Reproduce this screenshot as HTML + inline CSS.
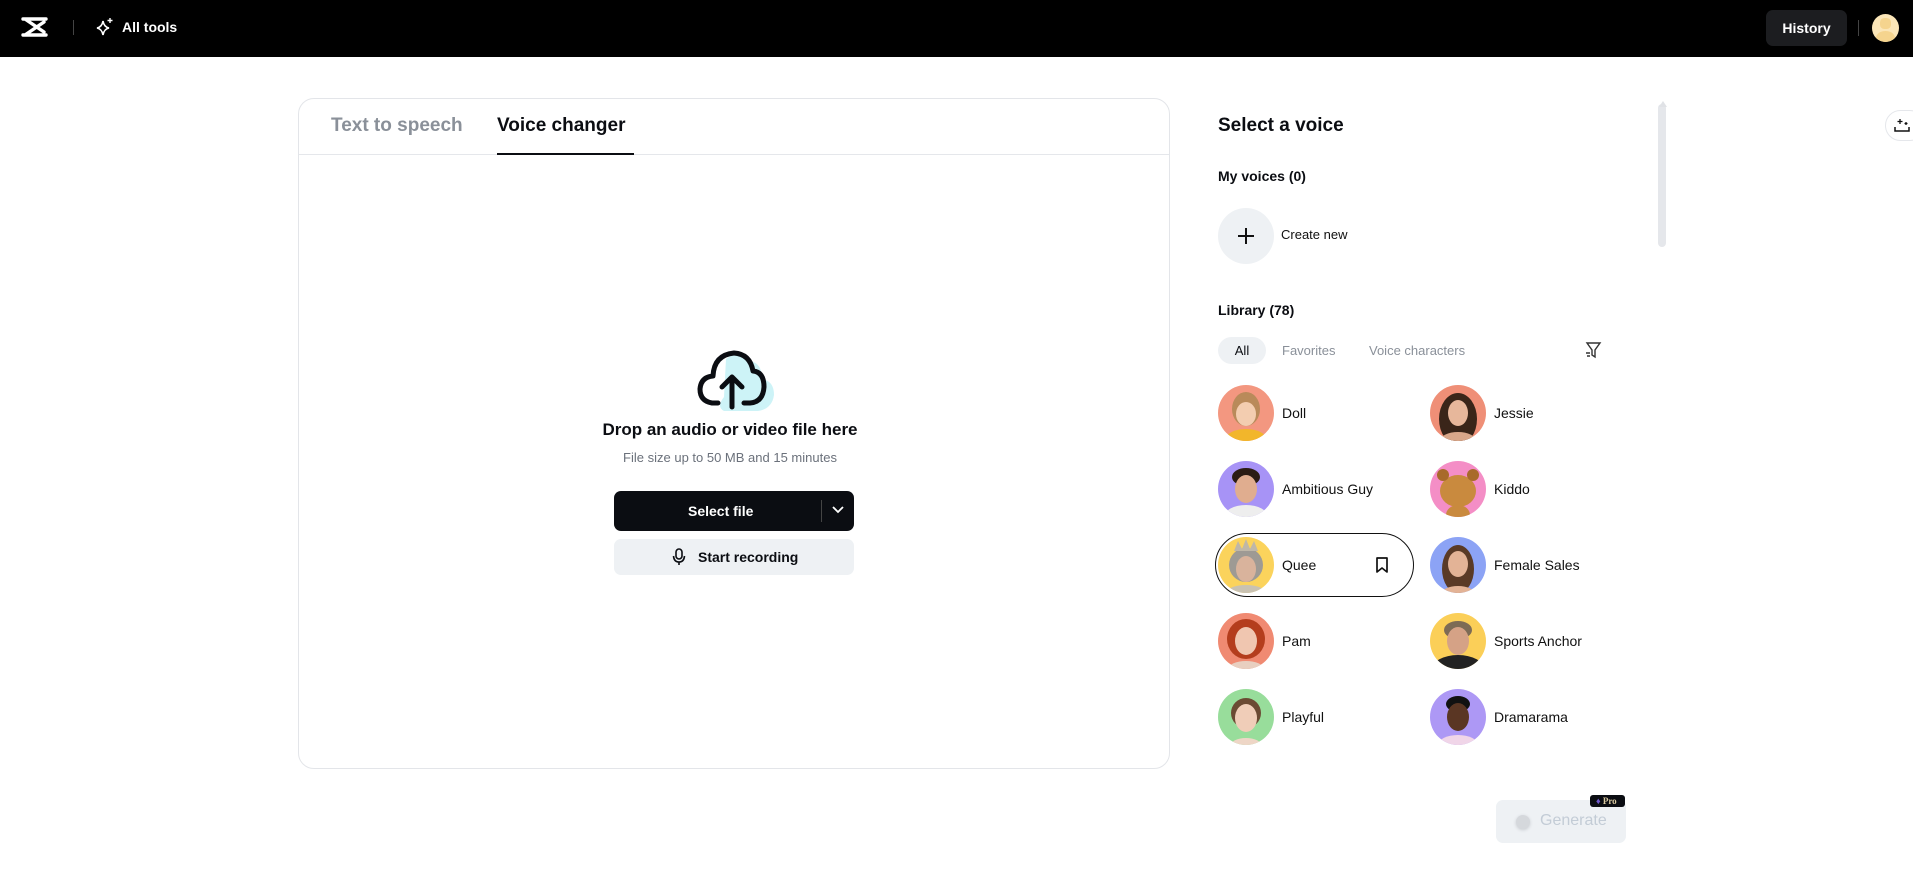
<!DOCTYPE html>
<html><head><meta charset="utf-8">
<style>
*{margin:0;padding:0;box-sizing:border-box}
body{width:1913px;height:873px;background:#fff;font-family:"Liberation Sans",sans-serif;position:relative;overflow:hidden;color:#0b0d12}
.abs{position:absolute}
.hdr{left:0;top:0;width:1913px;height:57px;background:#000}
.panel{left:298px;top:98px;width:872px;height:671px;border:1px solid #e3e5e9;border-radius:16px}
.tab{top:115px;font-size:19px;font-weight:bold}
.av{width:56px;height:56px;border-radius:50%;overflow:hidden}
.nm{font-size:14px;color:#111}
</style></head><body>
<div class="abs hdr"></div>
<svg class="abs" style="left:21px;top:16px" width="27" height="22" viewBox="0 0 27 22"><path d="M2 3 L25 3 M2 19 L25 19 M4 3 L23 16 M23 6 L4 19" stroke="#fff" stroke-width="3.4" fill="none" stroke-linecap="round"/></svg>
<div class="abs" style="left:73px;top:20px;width:1px;height:15px;background:#444"></div>
<svg class="abs" style="left:96px;top:17px" width="18" height="19" viewBox="0 0 18 19"><path d="M7 4 Q8 10 13 11 Q8 12 7 18 Q6 12 1 11 Q6 10 7 4Z" stroke="#fff" stroke-width="1.6" fill="none"/><path d="M14 1 v5 M11.5 3.5 h5" stroke="#fff" stroke-width="1.4"/></svg>
<div class="abs" style="left:122px;top:19px;color:#fff;font-size:14px;font-weight:bold">All tools</div>
<div class="abs" style="left:1766px;top:10px;width:81px;height:36px;background:#1c1d20;border-radius:7px;color:#fff;font-size:14px;font-weight:bold;text-align:center;line-height:36px">History</div>
<div class="abs" style="left:1858px;top:20px;width:1px;height:16px;background:#444"></div>
<div class="abs" style="left:1872px;top:14px;width:27px;height:28px;border-radius:50%;background:#fbe6b8;overflow:hidden"><div style="position:absolute;left:8px;top:4px;width:11px;height:11px;border-radius:40%;background:#f5d48e"></div><div style="position:absolute;left:4px;top:17px;width:19px;height:14px;border-radius:50%;background:#f5d48e"></div></div>

<div class="abs panel"></div>
<div class="abs tab" style="left:331px;color:#8a9099">Text to speech</div>
<div class="abs tab" style="left:497px">Voice changer</div>
<div class="abs" style="left:299px;top:154px;width:870px;height:1px;background:#e5e7eb"></div>
<div class="abs" style="left:497px;top:153px;width:137px;height:2px;background:#0b0d12"></div>

<svg class="abs" style="left:696px;top:347px" width="78" height="66" viewBox="0 0 78 66"><path d="M30 12 Q42 2 54 14 Q66 16 66 32 Q78 34 78 48 Q76 62 62 64 L28 64 Q20 60 28 50 Z" fill="#cdf3f7"/><path d="M22 56 L16 56 Q4 54 4 42 Q5 30 17 29 Q18 8 38 6 Q54 7 57 24 Q68 25 68 40 Q67 55 54 56 L48 56" stroke="#0b0d12" stroke-width="5" fill="none" stroke-linejoin="round" stroke-linecap="round"/><path d="M36 60 V30 M26 40 L36 30 L46 40" stroke="#0b0d12" stroke-width="5" fill="none" stroke-linecap="round" stroke-linejoin="round"/></svg>
<div class="abs" style="left:580px;width:300px;top:420px;text-align:center;font-size:17px;font-weight:bold">Drop an audio or video file here</div>
<div class="abs" style="left:580px;width:300px;top:450px;text-align:center;font-size:13px;color:#6b717b">File size up to 50 MB and 15 minutes</div>
<div class="abs" style="left:614px;top:491px;width:240px;height:40px;background:#0b0d12;border-radius:7px;color:#fff;font-size:14px;font-weight:bold;line-height:40px;padding-left:74px">Select file</div>
<div class="abs" style="left:821px;top:500px;width:1px;height:22px;background:#444"></div>
<svg class="abs" style="left:831px;top:505px" width="14" height="10" viewBox="0 0 14 10"><path d="M2 2 L7 7 L12 2" stroke="#fff" stroke-width="1.8" fill="none"/></svg>
<div class="abs" style="left:614px;top:539px;width:240px;height:36px;background:#eef1f4;border-radius:7px;font-size:14px;font-weight:bold;line-height:36px;padding-left:84px">Start recording</div>
<svg class="abs" style="left:672px;top:548px" width="14" height="18" viewBox="0 0 14 18"><rect x="4" y="1" width="6" height="10" rx="3" stroke="#0b0d12" stroke-width="1.6" fill="none"/><path d="M1.5 8 Q2 14 7 14 Q12 14 12.5 8 M7 14 V17" stroke="#0b0d12" stroke-width="1.6" fill="none"/></svg>

<div class="abs" style="left:1218px;top:115px;font-size:19px;font-weight:bold">Select a voice</div>
<div class="abs" style="left:1218px;top:168px;font-size:14px;font-weight:bold">My voices (0)</div>
<div class="abs" style="left:1218px;top:208px;width:56px;height:56px;border-radius:50%;background:#eef1f4"></div>
<div class="abs" style="left:1238px;top:235px;width:16px;height:2px;background:#111"></div>
<div class="abs" style="left:1245px;top:228px;width:2px;height:16px;background:#111"></div>
<div class="abs nm" style="left:1281px;top:227px;font-size:13px">Create new</div>
<div class="abs" style="left:1218px;top:302px;font-size:14px;font-weight:bold">Library (78)</div>
<div class="abs" style="left:1218px;top:337px;width:48px;height:27px;border-radius:14px;background:#eef1f4;font-size:13px;line-height:27px;text-align:center">All</div>
<div class="abs" style="left:1282px;top:343px;font-size:13px;color:#8a9099">Favorites</div>
<div class="abs" style="left:1369px;top:343px;font-size:13px;color:#8a9099">Voice characters</div>
<svg class="abs" style="left:1584px;top:341px" width="18" height="18" viewBox="0 0 18 18"><path d="M3 2 H16 L11 9 V16 L8 14 V9 Z" stroke="#333" stroke-width="1.4" fill="none"/><path d="M2 12 H6 M3 15 H6" stroke="#333" stroke-width="1.4"/></svg>
<div class="abs" style="left:1658px;top:104px;width:8px;height:143px;border-radius:4px;background:#e5e7eb"></div>
<div class="abs" style="left:1659px;top:102px;width:0;height:0;border-left:4px solid transparent;border-right:4px solid transparent;border-bottom:6px solid #e0e2e6;top:101px"></div>
<div class="abs" style="left:1885px;top:110px;width:40px;height:31px;border:1px solid #e5e7eb;border-radius:16px;background:#fff"></div>
<svg class="abs" style="left:1893px;top:116px" width="18" height="18" viewBox="0 0 18 18"><path d="M2 11 V15 H16 V11" stroke="#111" stroke-width="1.5" fill="none"/><path d="M7 3 v5 M4.5 5.5 h5 M13 6 v3 M11.5 7.5 h3" stroke="#111" stroke-width="1.3"/></svg>

<div class="abs" style="left:1215px;top:533px;width:199px;height:64px;border:1.5px solid #111;border-radius:32px"></div>
<svg class="abs" style="left:1375px;top:556px" width="14" height="18" viewBox="0 0 14 18"><path d="M2 2 H12 V16 L7 12 L2 16 Z" stroke="#111" stroke-width="1.7" fill="none" stroke-linejoin="round"/></svg>

<!-- avatars -->
<svg class="abs" style="left:1218px;top:385px" width="56" height="56"><defs><clipPath id="c"><circle cx="28" cy="28" r="28"/></clipPath></defs><g clip-path="url(#c)"><rect width="56" height="56" fill="#f39780"/><ellipse cx="28" cy="54" rx="20" ry="10" fill="#f2b62b"/><ellipse cx="28" cy="24" rx="14" ry="17" fill="#b98a5a"/><ellipse cx="28" cy="29" rx="10" ry="12" fill="#f3cdb0"/></g></svg>
<svg class="abs" style="left:1430px;top:385px" width="56" height="56"><g clip-path="url(#c)"><rect width="56" height="56" fill="#ef8f77"/><ellipse cx="28" cy="34" rx="19" ry="26" fill="#3a2519"/><ellipse cx="28" cy="28" rx="10" ry="13" fill="#e7b79b"/><ellipse cx="28" cy="56" rx="18" ry="9" fill="#d9a78a"/></g></svg>
<svg class="abs" style="left:1218px;top:461px" width="56" height="56"><g clip-path="url(#c)"><rect width="56" height="56" fill="#a793f6"/><ellipse cx="28" cy="56" rx="22" ry="12" fill="#eee"/><ellipse cx="28" cy="16" rx="14" ry="9" fill="#2b1c14"/><ellipse cx="28" cy="28" rx="11" ry="14" fill="#e0ad8f"/></g></svg>
<svg class="abs" style="left:1430px;top:461px" width="56" height="56"><g clip-path="url(#c)"><rect width="56" height="56" fill="#f48ec6"/><ellipse cx="28" cy="30" rx="18" ry="16" fill="#c98a3e"/><circle cx="13" cy="14" r="6" fill="#a86a2b"/><circle cx="43" cy="14" r="6" fill="#a86a2b"/><ellipse cx="28" cy="54" rx="12" ry="10" fill="#c98a3e"/></g></svg>
<svg class="abs" style="left:1218px;top:537px" width="56" height="56"><g clip-path="url(#c)"><rect width="56" height="56" fill="#fbd35c"/><ellipse cx="28" cy="28" rx="17" ry="17" fill="#9e9a94"/><ellipse cx="28" cy="32" rx="10" ry="13" fill="#d9b39c"/><path d="M16 14 L20 4 L24 12 L28 2 L32 12 L36 4 L40 14Z" fill="#bfb7a8"/><ellipse cx="28" cy="56" rx="20" ry="8" fill="#c9c2b2"/></g></svg>
<svg class="abs" style="left:1430px;top:537px" width="56" height="56"><g clip-path="url(#c)"><rect width="56" height="56" fill="#8ca3f5"/><ellipse cx="28" cy="32" rx="16" ry="24" fill="#5a3a26"/><ellipse cx="28" cy="27" rx="10" ry="13" fill="#e3b396"/><ellipse cx="28" cy="57" rx="17" ry="8" fill="#e3b396"/></g></svg>
<svg class="abs" style="left:1218px;top:613px" width="56" height="56"><g clip-path="url(#c)"><rect width="56" height="56" fill="#f08a72"/><ellipse cx="28" cy="26" rx="19" ry="20" fill="#b43d1d"/><ellipse cx="28" cy="28" rx="11" ry="14" fill="#f0c6b0"/><ellipse cx="28" cy="56" rx="18" ry="8" fill="#e8cfc0"/></g></svg>
<svg class="abs" style="left:1430px;top:613px" width="56" height="56"><g clip-path="url(#c)"><rect width="56" height="56" fill="#fbcf58"/><ellipse cx="28" cy="56" rx="26" ry="14" fill="#222"/><ellipse cx="28" cy="17" rx="14" ry="9" fill="#7d6b55"/><ellipse cx="28" cy="28" rx="11" ry="14" fill="#d5a286"/></g></svg>
<svg class="abs" style="left:1218px;top:689px" width="56" height="56"><g clip-path="url(#c)"><rect width="56" height="56" fill="#98dd9b"/><ellipse cx="28" cy="24" rx="15" ry="15" fill="#6b4a33"/><ellipse cx="28" cy="29" rx="11" ry="14" fill="#f0cdb8"/><ellipse cx="28" cy="57" rx="16" ry="8" fill="#eed6c6"/></g></svg>
<svg class="abs" style="left:1430px;top:689px" width="56" height="56"><g clip-path="url(#c)"><rect width="56" height="56" fill="#ad98f5"/><ellipse cx="28" cy="56" rx="20" ry="10" fill="#f0d5e8"/><ellipse cx="28" cy="15" rx="12" ry="8" fill="#111"/><ellipse cx="28" cy="28" rx="11" ry="14" fill="#5a3623"/></g></svg>

<div class="abs nm" style="left:1282px;top:405px">Doll</div>
<div class="abs nm" style="left:1494px;top:405px">Jessie</div>
<div class="abs nm" style="left:1282px;top:481px">Ambitious Guy</div>
<div class="abs nm" style="left:1494px;top:481px">Kiddo</div>
<div class="abs nm" style="left:1282px;top:557px">Quee</div>
<div class="abs nm" style="left:1494px;top:557px">Female Sales</div>
<div class="abs nm" style="left:1282px;top:633px">Pam</div>
<div class="abs nm" style="left:1494px;top:633px">Sports Anchor</div>
<div class="abs nm" style="left:1282px;top:709px">Playful</div>
<div class="abs nm" style="left:1494px;top:709px">Dramarama</div>

<div class="abs" style="left:1496px;top:800px;width:130px;height:43px;background:#eef1f4;border-radius:7px"></div>
<div class="abs" style="left:1516px;top:815px;width:14px;height:14px;border-radius:50%;background:#d5d8dc;box-shadow:0 1px 3px #c8cbd0"></div>
<div class="abs" style="left:1540px;top:812px;font-size:16px;color:#c3ccd6">Generate</div>
<div class="abs" style="left:1590px;top:795px;width:35px;height:12px;background:#0b0d12;border-radius:3px;color:#d9c9a0;font-size:9px;line-height:12px;font-family:'Liberation Serif',serif;font-weight:bold;padding-left:6px"><span style="color:#6d57c9">♦</span> Pro</div>
</body></html>
